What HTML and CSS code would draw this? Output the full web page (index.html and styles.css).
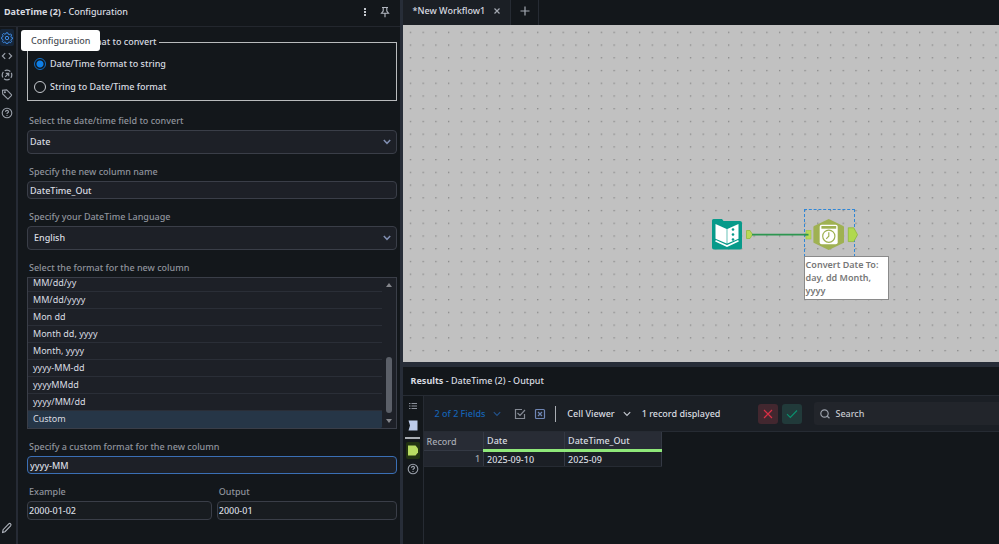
FILE: index.html
```html
<!DOCTYPE html>
<html lang="en">
<head>
    <meta charset="UTF-8">
    <meta name="viewport" content="width=device-width, initial-scale=1.0">
    <title>New Workflow1</title>
    <link rel="stylesheet" href="styles.css">
</head>
<body>
    <!-- Configuration panel -->
    <section class="config">
        <header class="config-header">
            <h1><b>DateTime (2)</b> - Configuration</h1>
            <button class="icon-btn" aria-label="More options">
                <svg width="10" height="12" viewBox="0 0 10 12" fill="#c3c7ce"><rect x="4" y="2" width="2" height="2"/><rect x="4" y="5" width="2" height="2"/><rect x="4" y="8" width="2" height="2"/></svg>
            </button>
            <button class="icon-btn" aria-label="Pin panel">
                <svg width="10" height="12" viewBox="0 0 10 12" fill="none" stroke="#b4b9c2" stroke-width="1.1"><path d="M2 1.5h6M3.2 1.5v3.6L1.5 7.2h7L6.8 5.1V1.5M5 7.2v4"/></svg>
            </button>
        </header>

        <div class="config-body">
            <nav class="rail">
                <button class="rail-btn active" aria-label="Configuration">
                    <svg width="12" height="12" viewBox="0 0 12 12" fill="none" stroke="#3f8ee8" stroke-width="1"><path d="M5.2 .8h1.6l.4 1.4 1 .4 1.3-.7 1.1 1.1-.7 1.3.4 1 1.2.3v1.3l-1.2.4-.4 1 .7 1.3-1.1 1.1-1.3-.7-1 .4-.4 1.2H5.2l-.4-1.2-1-.4-1.3.7-1.1-1.1.7-1.3-.4-1L.6 6.900V5.300l1.100-.4.400-1-.7-1.300 1.100-1.100 1.300.7 1-.4z"/><circle cx="6" cy="6" r="1.700"/></svg>
                </button>
                <button class="rail-btn" aria-label="XML view">
                    <svg width="12" height="12" viewBox="0 0 12 12" fill="none" stroke="#9aa0aa" stroke-width="1.2"><path d="M4.200 3.200L1.400 6l2.800 2.800M7.800 3.200L10.600 6 7.800 8.800"/></svg>
                </button>
                <button class="rail-btn" aria-label="Navigation">
                    <svg width="12" height="12" viewBox="0 0 12 12" fill="none" stroke="#9aa0aa" stroke-width="1.2"><circle cx="6" cy="6" r="4.800" stroke-dasharray="6 1.540" stroke-dashoffset="3"/><path d="M4.200 7.800l3.300-3.300M4.800 4.300h2.900v2.900"/></svg>
                </button>
                <button class="rail-btn" aria-label="Annotation">
                    <svg width="12" height="12" viewBox="0 0 12 12" fill="none" stroke="#9aa0aa" stroke-width="1.1"><path d="M1.500 2.300l.2 3.700 4.700 4.700q.5.400 1 0l3-3q.4-.5 0-1L5.700 1.900z"/><circle cx="3.900" cy="4.200" r=".5"/></svg>
                </button>
                <button class="rail-btn" aria-label="Help">
                    <svg width="12" height="12" viewBox="0 0 12 12" fill="none" stroke="#9aa0aa" stroke-width="1.1"><circle cx="6" cy="6" r="4.800"/><path d="M4.500 4.900q.1-1.500 1.500-1.500t1.500 1.300q0 .7-.8 1.100T6 7M6 8v1"/></svg>
                </button>
                <button class="rail-btn rail-edit" aria-label="Edit">
                    <svg width="12" height="12" viewBox="0 0 12 12" fill="none" stroke="#b0b5be" stroke-width="1.1"><path d="M1.600 10.400l.5-2.700 5.600-5.800q1-.9 1.900 0t0 1.900L4 9.700z"/></svg>
                </button>
                <div class="tooltip">Configuration</div>
            </nav>

            <form class="form">
                <fieldset class="mode">
                    <legend>Select the format to convert</legend>
                    <label><input type="radio" name="mode" checked> Date/Time format to string</label>
                    <label><input type="radio" name="mode"> String to Date/Time format</label>
                </fieldset>

                <div class="field">
                    <label for="dateField">Select the date/time field to convert</label>
                    <select class="control drop" id="dateField"><option>Date</option></select>
                </div>
                <div class="field">
                    <label for="columnName">Specify the new column name</label>
                    <input class="control" type="text" id="columnName" value="DateTime_Out">
                </div>
                <div class="field">
                    <label for="language">Specify your DateTime Language</label>
                    <select class="control drop indent" id="language"><option>English</option></select>
                </div>
                <div class="field">
                    <label for="format">Select the format for the new column</label>
                    <div class="format-box">
                        <select class="format-list" id="format" size="9">
                            <option>MM/dd/yy</option>
                            <option>MM/dd/yyyy</option>
                            <option>Mon dd</option>
                            <option>Month dd, yyyy</option>
                            <option>Month, yyyy</option>
                            <option>yyyy-MM-dd</option>
                            <option>yyyyMMdd</option>
                            <option>yyyy/MM/dd</option>
                            <option selected>Custom</option>
                        </select>
                        <div class="scrollbar">
                            <svg width="6" height="4" viewBox="0 0 6 4" fill="#85878c"><path d="M0 4l3-4 3 4z"/></svg>
                            <div class="thumb"></div>
                            <svg width="6" height="4" viewBox="0 0 6 4" fill="#85878c"><path d="M0 0l3 4 3-4z"/></svg>
                        </div>
                    </div>
                </div>
                <div class="field">
                    <label for="custom">Specify a custom format for the new column</label>
                    <input class="control focused" type="text" id="custom" value="yyyy-MM" autofocus>
                </div>
                <div class="pair">
                    <div class="field">
                        <label for="example">Example</label>
                        <input class="control result" type="text" id="example" value="2000-01-02" readonly>
                    </div>
                    <div class="field">
                        <label for="output">Output</label>
                        <input class="control result" type="text" id="output" value="2000-01" readonly>
                    </div>
                </div>
            </form>
        </div>
    </section>

    <main class="workspace">
        <!-- Workflow tabs -->
        <div class="tabs">
            <div class="tab">
                <span>*New Workflow1</span>
                <button class="icon-btn" aria-label="Close tab">
                    <svg width="8" height="8" viewBox="0 0 8 8" stroke="#a4a9b2" stroke-width="1.2"><path d="M1.500 1.500l5 5M6.500 1.500l-5 5"/></svg>
                </button>
            </div>
            <button class="icon-btn new-tab" aria-label="New tab">
                <svg width="10" height="10" viewBox="0 0 10 10" stroke="#a4a9b2" stroke-width="1.2"><path d="M5 .5v9M.5 5h9"/></svg>
            </button>
        </div>

        <!-- Canvas -->
        <div class="canvas">
            <svg class="grid" width="100%" height="100%">
                <defs>
                    <pattern id="dots" x="6.800" y="6.700" width="12.730" height="12.730" patternUnits="userSpaceOnUse">
                        <rect width="1.300" height="1.300" fill="#858585"/>
                    </pattern>
                </defs>
                <rect width="100%" height="100%" fill="url(#dots)"/>
            </svg>
            <div class="selection"></div>
            <svg class="tools" width="150" height="50" viewBox="0 0 150 50">
                <!-- input tool -->
                <path d="M2 10.500q0-1.500 1.500-1.500h8.500l1.500 2h16.500q2 0 2 2v24.500q0 2-2 2h-26q-2 0-2-2z" fill="#079a8a"/>
                <path d="M5.500 14l11.200 5v14.500L5.500 28.800z" fill="#fff"/>
                <path d="M28.500 14l-11.200 5v14.500l11.200-4.700z" fill="#fff"/>
                <path d="M5.500 30.800L17 36l11.500-5.200" fill="none" stroke="#fff" stroke-width="1.600"/>
                <g fill="#079a8a"><circle cx="23" cy="19.500" r="1.300"/><circle cx="23" cy="24.500" r="1.300"/><circle cx="23" cy="29.500" r="1.300"/></g>
                <!-- wire and anchors -->
                <path d="M36.500 20.500h3.500l2.500 4-2.500 4h-3.500z" fill="#b8d957" stroke="#94b83c" stroke-width=".8"/>
                <path d="M42 24.700h54" stroke="#2d9650" stroke-width="1.800"/>
                <rect x="96" y="20.500" width="5" height="8.500" fill="#b8d957" stroke="#a2c546" stroke-width=".6"/>
                <path d="M94.500 24.700h4" stroke="#2d9650" stroke-width="1.800"/>
                <!-- datetime tool -->
                <path d="M118.700 8.900l14.600 7q.7.400.7 1.200v14.800q0 .8-.7 1.200l-14.600 6.900-14.600-6.900q-.7-.4-.7-1.200V17.100q0-.8.7-1.200z" fill="#9fb152"/>
                <rect x="109.700" y="14.800" width="18" height="19.500" rx="2" fill="#fff"/>
                <rect x="111.400" y="16" width="14.800" height="2.700" fill="#9fb152"/>
                <circle cx="118.800" cy="26.200" r="6.100" fill="none" stroke="#9fb152" stroke-width="1.200"/>
                <path d="M118.800 22.200v4l-2.600 2.600" fill="none" stroke="#9fb152" stroke-width="1.200"/>
                <path d="M138.300 17.800h5.500l3.700 6.900-3.700 6.900h-5.500z" fill="#b0d94f" stroke="#8fb83a" stroke-width=".8"/>
            </svg>
            <div class="annotation">Convert Date To: day, dd Month, yyyy</div>
        </div>

        <!-- Results -->
        <section class="results">
            <h2><b>Results</b> - DateTime (2) - Output</h2>
            <div class="results-body">
                <nav class="results-rail">
                    <button class="rail-btn" aria-label="Messages">
                        <svg width="10" height="10" viewBox="0 0 10 10" stroke="#8c919b" stroke-width="1"><path d="M1 2.500h1.500M3.500 2.500h5.500M1 5h1.500M3.500 5h5.500M1 7.500h1.500M3.500 7.500h5.500"/></svg>
                    </button>
                    <button class="rail-btn" aria-label="Input anchor">
                        <svg width="10" height="11" viewBox="0 0 10 11"><path d="M.5.500h9v10h-9L2 5.500z" fill="#bccbea"/></svg>
                    </button>
                    <hr>
                    <button class="rail-btn anchor-on" aria-label="Output anchor">
                        <svg width="12" height="11" viewBox="0 0 12 11"><path d="M1 .5h7.500L11 3.500v4l-2.500 3H1z" fill="#b8dc62"/></svg>
                    </button>
                    <button class="rail-btn" aria-label="Help">
                        <svg width="12" height="12" viewBox="0 0 12 12" fill="none" stroke="#9aa0aa" stroke-width="1.1"><circle cx="6" cy="6" r="4.800"/><path d="M4.500 4.900q.1-1.500 1.500-1.500t1.500 1.300q0 .7-.8 1.100T6 7M6 8v1"/></svg>
                    </button>
                </nav>
                <div class="results-main">
                    <div class="toolbar">
                        <button class="text-btn fields">2 of 2 Fields
                            <svg width="8" height="6" viewBox="0 0 8 6" fill="none" stroke="#24528a" stroke-width="1.2"><path d="M.8 1.200L4 4.500l3.200-3.300"/></svg>
                        </button>
                        <button class="icon-btn" aria-label="Select all">
                            <svg width="12" height="12" viewBox="0 0 12 12" fill="none" stroke="#858a94" stroke-width="1.2"><path d="M8 1.500H1.500v9h9V6M3.500 5l2.500 2.500L11 2"/></svg>
                        </button>
                        <button class="icon-btn" aria-label="Deselect all">
                            <svg width="12" height="12" viewBox="0 0 12 12" fill="none" stroke="#6f86b5" stroke-width="1.2"><rect x="1.500" y="1.500" width="9" height="9" rx="1"/><path d="M4 4l4 4M8 4L4 8"/></svg>
                        </button>
                        <span class="divider"></span>
                        <button class="text-btn">Cell Viewer
                            <svg width="8" height="6" viewBox="0 0 8 6" fill="none" stroke="#c3c7ce" stroke-width="1.2"><path d="M.8 1.200L4 4.500l3.200-3.300"/></svg>
                        </button>
                        <span class="count">1 record displayed</span>
                        <button class="square cancel" aria-label="Cancel">
                            <svg width="10" height="10" viewBox="0 0 10 10" stroke="#d92f45" stroke-width="1.2"><path d="M1 1l8 8M9 1L1 9"/></svg>
                        </button>
                        <button class="square apply" aria-label="Apply">
                            <svg width="12" height="10" viewBox="0 0 12 10" fill="none" stroke="#0b8f6d" stroke-width="1.2"><path d="M1 5.200L4.300 8.500 11 1.500"/></svg>
                        </button>
                        <div class="search">
                            <svg width="10" height="10" viewBox="0 0 10 10" fill="none" stroke="#9aa0aa" stroke-width="1.2"><circle cx="4.500" cy="4.500" r="3.700"/><path d="M7 7l2.500 2.300"/></svg>
                            <input type="text" placeholder="Search" aria-label="Search">
                        </div>
                    </div>
                    <table>
                        <thead>
                            <tr><th class="record">Record</th><th class="date">Date</th><th class="out">DateTime_Out</th></tr>
                        </thead>
                        <tbody>
                            <tr><td class="record">1</td><td>2025-09-10</td><td>2025-09</td></tr>
                        </tbody>
                    </table>
                </div>
            </div>
        </section>
    </main>

    <script>
        // show the end of the format list
        const format = document.getElementById('format');
        format.scrollTop = format.scrollHeight;

        // put the caret after the typed format
        const custom = document.getElementById('custom');
        custom.focus();
        custom.setSelectionRange(custom.value.length, custom.value.length);
    </script>
</body>
</html>
```
FILE: styles.css
```css
* {
    margin: 0;
    padding: 0;
    box-sizing: border-box;
}

body {
    display: flex;
    min-height: 100vh;
    background: #13171b;
    color: #d9dce1;
    font-family: "Noto Sans", "Open Sans", sans-serif;
    font-size: 9px;
    font-weight: 500;
    line-height: 12px;
    overflow: hidden;
}

button, input, select {
    font: inherit;
    color: inherit;
    background: none;
    border: none;
    outline: none;
}

button {
    display: flex;
    align-items: center;
    justify-content: center;
    cursor: pointer;
}

svg {
    display: block;
    flex: none;
}

/* Configuration panel */
.config {
    display: flex;
    flex-direction: column;
    width: 40%;
}

.config-header {
    display: flex;
    align-items: center;
    gap: 10px;
    height: 27px;
    padding: 0 10px 3px 4px;
    border-bottom: 1px solid #23272e;
}

h1, h2 {
    font-size: 9px;
    font-weight: 500;
}

h1 {
    flex: 1;
}

.config-body {
    display: flex;
    flex: 1;
}

.rail {
    position: relative;
    display: flex;
    flex-direction: column;
    gap: 1px;
    width: 18px;
    padding-top: 2px;
    border-right: 2px solid #262b35;
}

.rail-btn {
    width: 14px;
    height: 18px;
}

.rail-btn.active {
    height: 17px;
    background: #16263a;
    border-radius: 2px;
}

.rail-edit {
    margin: auto 0 7px;
}

.tooltip {
    position: absolute;
    left: 21px;
    top: 3px;
    padding: 5px 9px 4px 10px;
    border-radius: 3px;
    background: #fff;
    color: #4a4e55;
    z-index: 1;
}

.form {
    flex: 1;
    display: flex;
    flex-direction: column;
    gap: 9px;
    padding: 8px 3px 0 9px;
}

.mode {
    display: flex;
    flex-direction: column;
    gap: 11px;
    padding: 9px 6px 7px;
    border: 1px solid #b9bbbd;
    margin-bottom: 2px;
}

.mode legend {
    padding: 0 2px;
    line-height: 14px;
}

.mode label {
    display: flex;
    align-items: center;
    gap: 4px;
}

.mode input {
    appearance: none;
    width: 12px;
    height: 12px;
    border: 1px solid #c8cbd0;
    border-radius: 50%;
}

.mode input:checked {
    border-color: #0f6fc9;
    background: radial-gradient(circle, #0f7fe6 3px, transparent 4px);
}

.field {
    display: flex;
    flex-direction: column;
}

.field label {
    padding-left: 2px;
    line-height: 18px;
    color: #8f939b;
}

.control {
    width: 100%;
    height: 18px;
    padding: 0 2px;
    border: 1px solid #3a3e48;
    border-radius: 4px;
    background: #1d2027;
}

.drop {
    appearance: none;
    height: 24px;
    background: #1d2027 url("data:image/svg+xml,%3Csvg xmlns='http://www.w3.org/2000/svg' width='8' height='6' fill='none' stroke='%237f8db0' stroke-width='1.5'%3E%3Cpath d='M.8 1l3.200 3.300L7.200 1'/%3E%3C/svg%3E") no-repeat right 5px center;
}

.drop.indent {
    padding-left: 6px;
}

.focused {
    border-color: #3a6fb5;
}

.result {
    height: 19px;
    padding: 0 1px;
    background: #181c20;
}

.format-box {
    display: flex;
    height: 152px;
    border: 1px solid #3a3e48;
    background: #1d2027;
}

.format-list {
    flex: 1;
    height: 150px;
    overflow-y: auto;
    scrollbar-width: none;
}

.format-list option {
    height: 17px;
    min-height: 17px;
    padding: 1px 5px 3px;
    border-bottom: 1px solid #2a2e37;
}

.format-list option:checked {
    border-color: #263647;
    background: #263647 linear-gradient(#263647, #263647);
    color: #d9dce1;
}

.scrollbar {
    display: flex;
    flex-direction: column;
    align-items: center;
    width: 14px;
    padding: 5px 0;
}

.thumb {
    width: 6px;
    height: 56px;
    margin: auto 0 6px;
    border-radius: 3px;
    background: #5b5f68;
}

.pair {
    display: grid;
    grid-template-columns: 37fr 36fr;
    gap: 5px;
}

/* Workspace */
.workspace {
    display: flex;
    flex-direction: column;
    flex: 1;
    min-width: 0;
    border-left: 3px solid #272d38;
}

.tabs {
    display: flex;
    height: 25px;
}

.tab, .new-tab {
    display: flex;
    align-items: center;
    border-right: 1px solid #262b33;
    padding-bottom: 3px;
}

.tab {
    gap: 8px;
    padding-left: 10px;
    padding-right: 9px;
    background: #1b1f25;
}

.new-tab {
    width: 28px;
}

.canvas {
    position: relative;
    flex: 1;
    background: #c1c1c1;
}

.grid {
    position: absolute;
    inset: 0;
}

.tools {
    position: absolute;
    left: 307px;
    top: 185px;
}

.selection {
    position: absolute;
    left: 401px;
    top: 184px;
    width: 51px;
    height: 48px;
    border: 1px dashed #2f86d6;
}

.annotation {
    position: absolute;
    left: 401px;
    top: 231px;
    width: 85px;
    padding: 1px 1px 2px;
    border: 1px solid #8a8a8a;
    background: #fff;
    color: #777;
    font-weight: 600;
    line-height: 13px;
}

/* Results */
.results {
    display: flex;
    flex-direction: column;
    min-height: 182px;
    border-top: 5px solid #272d38;
}

.results h2 {
    padding: 8px;
    border-bottom: 1px solid #262b33;
}

.results-body {
    display: flex;
    flex: 1;
}

.results-rail {
    display: flex;
    flex-direction: column;
    align-items: center;
    gap: 1px;
    width: 21px;
    padding-top: 1px;
    border-right: 1px solid #262b33;
}

.results-rail hr {
    width: 15px;
    margin: 2px 0;
    border: none;
    border-top: 2px solid #a9adb3;
}

.rail-btn.anchor-on {
    height: 17px;
    border-radius: 2px;
    background: #223312;
}

.results-main {
    flex: 1;
    min-width: 0;
}

.toolbar {
    display: flex;
    align-items: center;
    height: 36px;
    padding-left: 11px;
    background: #1b1f25;
    border-bottom: 1px solid #262b33;
}

.toolbar .icon-btn {
    margin-right: 8px;
}

.text-btn {
    gap: 8px;
}

.fields {
    margin-right: 13px;
    color: #1563b5;
}

.divider {
    width: 1px;
    height: 16px;
    margin: 0 11px 0 1px;
    background: #a9adb3;
}

.count {
    margin: 0 38px 0 11px;
}

.square {
    width: 20px;
    height: 20px;
    margin-right: 4px;
    border-radius: 3px;
}

.cancel {
    background: #42272f;
}

.apply {
    background: #213a3a;
}

.search {
    display: flex;
    flex: 1;
    align-items: center;
    gap: 5px;
    height: 23px;
    margin-left: 8px;
    padding-left: 6px;
    border-radius: 3px 0 0 3px;
    background: #22252b;
}

.search input {
    flex: 1;
    min-width: 0;
}

.search input::placeholder {
    color: #c6c9cf;
}

table {
    border-collapse: collapse;
}

th, td {
    height: 16px;
    padding: 2px 3px 0;
    border-right: 1px solid #343944;
    text-align: left;
    font-weight: 500;
}

th {
    background: #282c35;
    height: 18px;
    border-bottom: 3px solid #8fe87a;
}

td {
    background: #1b1f25;
    border-bottom: 1px solid #262b33;
}

.record {
    width: 60px;
    background: #22262e;
    color: #a6aab2;
}

th.record {
    background: #282c35;
    border-bottom: 1px solid #343944;
}

td.record {
    text-align: right;
}

.date {
    width: 81px;
}

.out {
    width: 97px;
}
```
